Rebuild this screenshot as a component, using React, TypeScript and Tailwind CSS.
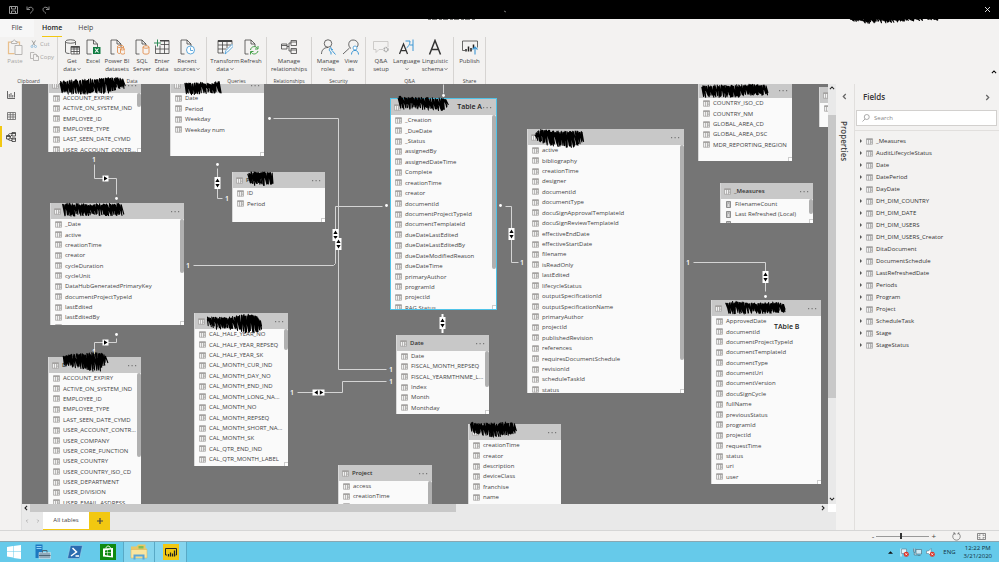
import type { ReactNode } from 'react';
import clsx from 'clsx';

type Point = [number, number];

interface TableNode {
  id: string;
  title?: string;
  hint?: string;
  x: number;
  y: number;
  w: number;
  h: number;
  fields: string[];
  thumb?: Point; // top, height
  selected?: boolean;
  measures?: boolean;
  resizable?: boolean;
}

const userFields = [
  'ACCOUNT_EXPIRY', 'ACTIVE_ON_SYSTEM_IND', 'EMPLOYEE_ID', 'EMPLOYEE_TYPE', 'LAST_SEEN_DATE_CYMD',
  'USER_ACCOUNT_CONTR...', 'USER_COMPANY', 'USER_CORE_FUNCTION', 'USER_COUNTRY', 'USER_COUNTRY_ISO_CD',
  'USER_DEPARTMENT', 'USER_DIVISION', 'USER_EMAIL_ASDRESS',
];

// positions are relative to the canvas
const nodes: TableNode[] = [
  { id: 'users', x: 26, y: -7, w: 93, h: 75, fields: userFields.slice(0, 6), thumb: [16, 14], resizable: true },
  { id: 'day', x: 148, y: -7, w: 94, h: 79, fields: ['Date', 'Period', 'Weekday', 'Weekday num'], resizable: true },
  { id: 'periods', title: 'P', x: 210, y: 88, w: 93, h: 50, fields: ['ID', 'Period'], resizable: true },
  {
    id: 'document', x: 28, y: 119, w: 134, h: 122, thumb: [16, 54], resizable: true,
    fields: ['_Date', 'active', 'creationTime', 'creator', 'cycleDuration', 'cycleUnit', 'DataHubGeneratedPrimaryKey', 'documentProjectTypeId', 'lastEdited', 'lastEditedBy', 'nextDocumentPeriodicMonth'],
  },
  {
    id: 'calendar', x: 172, y: 229, w: 94, h: 153, thumb: [16, 21], resizable: true,
    fields: ['CAL_HALF_YEAR_NO', 'CAL_HALF_YEAR_REPSEQ', 'CAL_HALF_YEAR_SK', 'CAL_MONTH_CUR_IND', 'CAL_MONTH_DAY_NO', 'CAL_MONTH_END_IND', 'CAL_MONTH_LONG_NA...', 'CAL_MONTH_NO', 'CAL_MONTH_REPSEQ', 'CAL_MONTH_SHORT_NA...', 'CAL_MONTH_SK', 'CAL_QTR_END_IND', 'CAL_QTR_MONTH_LABEL', 'CAL_QTR_NO'],
  },
  { id: 'creators', title: 'D', x: 26, y: 273, w: 93, h: 160, fields: userFields, thumb: [16, 84] },
  {
    id: 'task', hint: 'Table A', x: 368, y: 14, w: 107, h: 212, thumb: [16, 154], selected: true, resizable: true,
    fields: ['_Creation', '_DueDate', '_Status', 'assignedBy', 'assignedDateTime', 'Complete', 'creationTime', 'creator', 'documentId', 'documentProjectTypeId', 'documentTemplateId', 'dueDateLastEdited', 'dueDateLastEditedBy', 'dueDateModifiedReason', 'dueDateTime', 'primaryAuthor', 'programId', 'projectId', 'RAG Status'],
  },
  {
    id: 'dita', x: 505, y: 45, w: 157, h: 264, thumb: [16, 215], resizable: true,
    fields: ['active', 'bibliography', 'creationTime', 'designer', 'documentId', 'documentType', 'docuSignApprovalTemplateId', 'docuSignReviewTemplateId', 'effectiveEndDate', 'effectiveStartDate', 'filename', 'isReadOnly', 'lastEdited', 'lifecycleStatus', 'outputSpecificationId', 'outputSpecificationName', 'primaryAuthor', 'projectId', 'publishedRevision', 'references', 'requiresDocumentSchedule', 'revisionId', 'scheduleTaskId', 'status'],
  },
  {
    id: 'date', title: 'Date', x: 374, y: 251, w: 93, h: 79, thumb: [16, 36], resizable: true,
    fields: ['Date', 'FISCAL_MONTH_REPSEQ', 'FISCAL_YEARMTHNME_L...', 'Index', 'Month', 'Monthday'],
  },
  { id: 'project', title: 'Project', x: 316, y: 381, w: 94, h: 60, fields: ['access', 'creationTime', 'creator'], thumb: [16, 40] },
  { id: 'program', x: 446, y: 340, w: 93, h: 100, fields: ['creationTime', 'creator', 'description', 'deviceClass', 'franchise', 'name', 'region'] },
  {
    id: 'country', x: 676, y: -2, w: 94, h: 79, resizable: true,
    fields: ['COUNTRY_ISO_CD', 'COUNTRY_NM', 'GLOBAL_AREA_CD', 'GLOBAL_AREA_DSC', 'MDR_REPORTING_REGION'],
  },
  { id: 'stage', title: 'Stage', x: 797, y: 3, w: 93, h: 40, fields: ['Stage'] },
  {
    id: 'measures', title: '_Measures', x: 698, y: 99, w: 93, h: 40, thumb: [16, 15], measures: true, resizable: true,
    fields: ['FilenameCount', 'Last Refreshed (Local)', 'Total Sum'],
  },
  {
    id: 'audit', x: 689, y: 216, w: 110, h: 184, resizable: true,
    fields: ['ApprovedDate', 'documentId', 'documentProjectTypeId', 'documentTemplateId', 'documentType', 'documentUri', 'documentVersion', 'docuSignCycle', 'fullName', 'previousStatus', 'programId', 'projectId', 'requestTime', 'status', 'uri', 'user'],
  },
];

const relations = [
  '72,80 72,94 94,94 94,110',
  '94,254 94,258 72,258 72,266',
  '195,84 195,114 200,114',
  '251,34 316,34 316,285 364,285',
  '171,181 311,181 313,179 313,122 360,122',
  '275,308 320,308 320,297 364,297',
  '421,0 421,9',
  '483,122 489,122 489,178 496,178',
  '671,178 743,178 743,207',
];
const ones: Point[] = [[72, 75], [72, 267], [205, 114], [166, 181], [369, 285], [270, 308], [369, 297], [500, 178], [666, 178]];
const dots: Point[] = [[94, 114], [94, 250], [195, 80], [247, 34], [421, 11], [364, 121], [478, 121], [743, 212]];
const vertical: Point[] = [[195, 99], [313, 151], [316, 160], [420, 239], [489, 150], [743, 193]];

const fieldTables = [
  '_Measures', 'AuditLifecycleStatus', 'Date', 'DatePeriod', 'DayDate', 'DH_DIM_COUNTRY', 'DH_DIM_DATE',
  'DH_DIM_USERS', 'DH_DIM_USERS_Creator', 'DitaDocument', 'DocumentSchedule', 'LastRefreshedDate', 'Periods',
  'Program', 'Project', 'ScheduleTask', 'Stage', 'StageStatus',
];

// marker strokes: x, top, bottom along each one
const markers: [number, number, number][][] = [
  [[60, 82, 92], [70, 81, 93], [100, 79, 92], [110, 78, 92], [114, 78, 88], [124, 79, 87]],
  [[185, 83, 93], [190, 84, 94], [200, 83, 92], [210, 84, 92], [220, 82, 92]],
  [[248, 173, 184], [273, 173, 184]],
  [[63, 204, 215], [90, 205, 214], [122, 204, 215]],
  [[207, 318, 325], [215, 318, 328], [230, 318, 328], [240, 316, 331], [250, 315, 332], [258, 318, 330], [261, 322, 326]],
  [[63, 356, 365], [75, 355, 367], [90, 354, 370], [98, 353, 370], [103, 354, 364], [106, 357, 361]],
  [[398, 97, 108], [420, 98, 108], [440, 99, 110], [447, 100, 105]],
  [[535, 135, 138], [541, 130, 143], [555, 132, 145], [570, 132, 146], [583, 132, 141]],
  [[702, 86, 96], [735, 86, 96], [750, 85, 94], [767, 86, 94]],
  [[726, 303, 312], [740, 302, 313], [755, 304, 312], [775, 303, 312], [785, 305, 311]],
  [[470, 423, 431], [485, 424, 435], [495, 424, 436], [505, 423, 434], [515, 424, 432]],
  [[848, 18, 19], [865, 18, 22], [890, 18, 21], [920, 18, 19], [932, 18, 18], [938, 18, 20]],
];

function zigzag(profile: [number, number, number][], seed: number) {
  const points: string[] = [];
  let s = seed * 97 + 13;
  const noise = () => {
    s = (s * 1103515245 + 12345) % 2147483648;
    return s / 2147483648 - 0.5;
  };
  for (let i = 0; i < profile.length - 1; i++) {
    const [x0, t0, b0] = profile[i];
    const [x1, t1, b1] = profile[i + 1];
    for (let x = x0; x < x1; x += 1) {
      const k = (x - x0) / (x1 - x0);
      points.push(`${x + noise()},${t0 + (t1 - t0) * k + noise() * 2}`);
      points.push(`${x + 2 + noise() * 2},${b0 + (b1 - b0) * k + noise() * 3}`);
    }
  }
  return points.join(' ');
}

function GridIcon({ className = 'text-[#9b9997]' }: { className?: string }) {
  return (
    <svg className={clsx('h-[7px] w-[7px] shrink-0', className)} viewBox="0 0 14 14" fill="none" stroke="currentColor" strokeWidth="1.300">
      <path d="M1 1.500h12v11H1z" fill="#f1f1f1" />
      <path d="M1 2.500h12" strokeWidth="2.400" />
      <path d="M5 3v9.500M9 3v9.500M9 6.200h4M9 9.300h4" />
    </svg>
  );
}

function CalcIcon() {
  return (
    <svg className="h-[7px] w-[7px] shrink-0 text-[#777]" viewBox="0 0 14 14" fill="none" stroke="currentColor">
      <path d="M3 1h8v12H3z" strokeWidth="1.600" fill="#ddd" />
      <path d="M4.500 4h5M5 7.500h1M8 7.500h1M5 10h1M8 10h1" strokeWidth="1.600" />
    </svg>
  );
}

function TableCard({ node }: { node: TableNode }) {
  return (
    <section
      className={clsx(
        'absolute flex flex-col overflow-hidden bg-[#fafafa] text-[6px] text-[#444]',
        node.selected ? 'border border-[#4fc3e8]' : 'border-l border-[#d8d8d8]',
      )}
      style={{ left: node.x, top: node.y, width: node.w, height: node.h }}
    >
      <header className="flex h-4 shrink-0 items-center gap-[3px] bg-[#c8c8c8] pr-1 pl-[3px]">
        <GridIcon />
        <h2 className="font-semibold text-[#333]">{node.title}</h2>
        {node.hint && <span className="ml-auto text-[7px] font-semibold text-[#222]">{node.hint}</span>}
        <button className={clsx('leading-none text-[#777]', node.hint ? '-ml-[2px]' : 'ml-auto')} aria-label="More options">
          <svg className="h-[3px] w-[9px]" viewBox="0 0 9 3" fill="currentColor">
            <path d="M0 1h1.200v1.200H0zM3.500 1h1.200v1.200H3.500zM7 1h1.200v1.200H7z" />
          </svg>
        </button>
      </header>
      <ul className="flex shrink-0 flex-col pl-1" style={{ height: Math.round((node.fields.length * 52) / 5) }}>
        {node.fields.map(field => (
          <li key={field} className="flex min-h-0 flex-1 items-center gap-[3px] leading-[10px] whitespace-nowrap">
            {node.measures ? <CalcIcon /> : <GridIcon />}
            {field}
          </li>
        ))}
      </ul>
      {node.thumb && (
        <span className="absolute right-0 w-1 rounded-sm bg-[#b0b0b0]" style={{ top: node.thumb[0], height: node.thumb[1] }} />
      )}
      {node.resizable && (
        <span className="absolute right-0 bottom-0 h-1 w-1 border-t border-l border-[#ccc] bg-white" />
      )}
    </section>
  );
}

function Relations() {
  return (
    <svg className="pointer-events-none absolute inset-0 h-full w-full" fill="none">
      {relations.map(points => (
        <polyline key={points} points={points} stroke="#d4d4d4" strokeWidth="1" transform="translate(.5 .5)" />
      ))}
      {dots.map(([x, y]) => (
        <circle key={`${x}-${y}`} cx={x + 0.5} cy={y + 0.5} r="1.400" fill="#fff" />
      ))}
      {ones.map(([x, y]) => (
        <text key={`${x}-${y}`} x={x} y={y + 3} textAnchor="middle" fill="#fff" className="text-[7px] font-semibold">1</text>
      ))}
      <path d="M420.500 230v19" stroke="#fff" strokeWidth="2" />
      {vertical.map(([x, y]) => (
        <g key={`${x}-${y}`} transform={`translate(${x} ${y})`}>
          <path d="M-2.500-6h6V6h-6z" fill="#fff" />
          <path d="M-1.600-1 .5-4.500 2.600-1zM-1.600 1 .5 4.500 2.600 1z" fill="#000" />
        </g>
      ))}
      {[94, 258].map(y => (
        <g key={y} transform={`translate(83 ${y})`}>
          <path d="M-2.500-2.500h6v6h-6z" fill="#fff" />
          <path d="M-1-1.700 2.500.5-1 2.700z" fill="#000" />
        </g>
      ))}
      <path d="M290.500 305.500h12v6h-12z" fill="#fff" />
      <path d="m295.800 306.300-3.500 2.200 3.500 2.200zM297.800 306.300l3.500 2.200-3.500 2.200z" fill="#000" />
    </svg>
  );
}

function Chevron({ className }: { className?: string }) {
  return (
    <svg className={clsx('inline-block shrink-0', className)} viewBox="0 0 10 10" fill="none" stroke="currentColor" strokeWidth="1.800">
      <path d="m1.500 3.200 3.500 3.500 3.500-3.500" />
    </svg>
  );
}

function RibbonGroup({ label, children }: { label: string; children: ReactNode }) {
  return (
    <section className="flex h-[47px] flex-col border-r border-[#d6d4d2]">
      <div className="flex flex-1">{children}</div>
      <h2 className="text-center text-[5px] leading-[6px] text-[#444]">{label}</h2>
    </section>
  );
}

interface ToolProps {
  width: string;
  lines: string[];
  menu?: boolean;
  disabled?: boolean;
  children: ReactNode;
}

function Tool({ width, lines, menu, disabled, children }: ToolProps) {
  return (
    <button disabled={disabled} className={clsx('flex flex-col items-center pt-[2px]', width, disabled ? 'text-[#a8a6a4]' : 'text-[#444]')}>
      <svg className="mb-[2px] h-4 w-4 shrink-0" viewBox="0 0 32 32" fill="none" stroke="currentColor" strokeWidth="1.600">
        {children}
      </svg>
      {lines.map((line, i) => (
        <span key={i} className="flex h-2 items-center gap-px text-[6px] leading-[8px] whitespace-nowrap">
          {line}
          {menu && i === lines.length - 1 && <Chevron className="h-[4px] w-[4px]" />}
        </span>
      ))}
    </button>
  );
}

const Page = () => <path d="M11 30H4V2h12l8 8v6M16 2v8h8" />;
const Cylinder = () => (
  <g stroke="#e0843c" fill="#f7f2ee">
    <path d="M18 16v12c0 3 12 3 12 0V16" />
    <ellipse cx="24" cy="16" rx="6" ry="2.500" />
  </g>
);

function Ribbon() {
  return (
    <div className="flex bg-[#f3f2f1]">
      <RibbonGroup label="Clipboard">
        <Tool width="w-[30px]" lines={['Paste']} disabled>
          <path d="M9 6H3v23h12M20 6h5v6" stroke="#e9c08c" strokeWidth="2.500" />
          <path d="M9 9V5h3c0-4 5-4 5 0h3v4zM16 13h14v18H16z" fill="#f6f5f4" />
        </Tool>
        <div className="flex w-[27px] flex-col gap-1 pt-[3px] text-[6px] leading-[8px] text-[#a8a6a4]">
          <button disabled className="flex items-center gap-[2px]">
            <svg className="h-2 w-2" viewBox="0 0 16 16" fill="none" stroke="currentColor" strokeWidth="1.500">
              <path d="m4 1 6 10M11 1 5 11" stroke="#8a8886" />
              <circle cx="4" cy="13" r="2" stroke="#7fb4dc" />
              <circle cx="11" cy="13" r="2" stroke="#7fb4dc" />
            </svg>
            Cut
          </button>
          <button disabled className="flex items-center gap-px">
            <svg className="h-[9px] w-[9px]" viewBox="0 0 18 18" fill="none" stroke="currentColor" strokeWidth="1.500">
              <path d="M6 13H1V1h7l2 2M7 5h6l4 4v8H7zM13 5v4h4" />
            </svg>
            Copy
          </button>
        </div>
      </RibbonGroup>
      <RibbonGroup label="Data">
        <Tool width="w-7" lines={['Get', 'data']} menu>
          <path d="M3 5v21c0 2 4 3 8 3M23 5v7" />
          <ellipse cx="13" cy="5" rx="10" ry="3.500" />
          <path d="M14 15h17v15H14zM14 20h17M14 25h17M20 15v15M26 15v15" fill="#fff" />
          <path d="M14 16h17" strokeWidth="3" />
        </Tool>
        <Tool width="w-[14px]" lines={['Excel']}>
          <path d="M13 30H4V2h13l8 8v6M17 2v8h8" />
          <path d="M16 16h15v14H16z" fill="#107c41" stroke="none" />
          <path d="m20 19 7 8M27 19l-7 8" stroke="#fff" strokeWidth="2.200" />
        </Tool>
        <Tool width="w-[34px]" lines={['Power BI', 'datasets']}>
          <Page />
          <path d="M17 15v11c0 3 3 3 5 3M29 18v-3M23 20v8c0 3 9 3 9 0v-8" stroke="#e0843c" fill="#f7f2ee" />
          <ellipse cx="23" cy="15" rx="6" ry="2.200" stroke="#e0843c" />
          <ellipse cx="27" cy="20" rx="4" ry="2" stroke="#e0843c" />
        </Tool>
        <Tool width="w-4" lines={['SQL', 'Server']}>
          <Page />
          <Cylinder />
        </Tool>
        <Tool width="w-6" lines={['Enter', 'data']}>
          <path d="M13 3h17v26H3V13M3 20h27M13 11h17M12 13v16M21 3v26" />
          <path d="M12 3.500h18" strokeWidth="3" />
          <path d="M7 1v14M0 8h14" stroke="#2e8b57" strokeWidth="2" />
        </Tool>
        <Tool width="w-[26px]" lines={['Recent', 'sources']} menu>
          <Page />
          <circle cx="23" cy="22" r="8" stroke="#3a96d4" fill="#fff" />
          <path d="M23 17v6h5" stroke="#3a96d4" />
        </Tool>
        <span className="w-[6px]" />
      </RibbonGroup>
      <RibbonGroup label="Queries">
        <Tool width="w-[36px]" lines={['Transform', 'data']} menu>
          <path d="M14 28H2V3h28v8M2 12h26M2 20h17M11 6v22M20 6v12" />
          <path d="M2 4h28" strokeWidth="4" />
          <path d="m16 30 2-7 12-12 3 3-12 12z" stroke="#3a96d4" fill="#fff" />
        </Tool>
        <Tool width="w-4" lines={['Refresh']}>
          <Page />
          <path d="M15 22c1-8 11-9 14-3M30 14v6h-6M30 24c-2 7-11 8-14 2M15 31v-6h6" stroke="#43a047" strokeWidth="2" />
        </Tool>
        <span className="w-[7px]" />
      </RibbonGroup>
      <RibbonGroup label="Relationships">
        <Tool width="w-[44px]" lines={['Manage', 'relationships']}>
          <path d="M1 10h11v10H1zM20 3h11v10H20zM20 19h11v10H20zM1 13h11M20 6h11M20 22h11M12 15h4M20 8h-4v16h4" />
        </Tool>
      </RibbonGroup>
      <RibbonGroup label="Security">
        <Tool width="w-8" lines={['Manage', 'roles']}>
          <circle cx="16" cy="9" r="7.500" />
          <path d="M3 30c0-8 5-13 13-13" />
          <path d="M22 17c-5 2-4 8 0 9v5M22 17l1 5 3-1M24 23l7 8" stroke="#3a96d4" strokeWidth="2" />
        </Tool>
        <Tool width="w-[14px]" lines={['View', 'as']}>
          <path d="M16 19c-7-4-6-17 4-17 9 0 13 9 8 14M13 18 0 30" />
          <circle cx="24" cy="18" r="4" stroke="#3a96d4" fill="#fff" />
          <path d="M17 31c0-11 14-11 14 0" stroke="#3a96d4" strokeWidth="2" />
        </Tool>
        <span className="w-[7px]" />
      </RibbonGroup>
      <RibbonGroup label="Q&A">
        <Tool width="w-[30px]" lines={['Q&A', 'setup']}>
          <path d="M20 21h-8l-6 6v-6H1V5h29v11" stroke="#c4c2c0" />
          <circle cx="26" cy="21" r="4" stroke="#aaa" strokeWidth="3" strokeDasharray="3 1" />
        </Tool>
        <Tool width="w-[21px]" lines={['Language', '']} menu>
          <path d="m1 30 8-20 8 20M4 23h10" stroke="#333" strokeWidth="2.500" />
          <path d="M13 4h9c0 7-3 11-7 14M28 1v23M22 12h6" stroke="#3a96d4" strokeWidth="2" />
        </Tool>
        <Tool width="w-[36px]" lines={['Linguistic', 'schema']} menu>
          <path d="M5 31 16 3l11 28M9 21h14" stroke="#333" strokeWidth="3" />
        </Tool>
      </RibbonGroup>
      <RibbonGroup label="Share">
        <Tool width="w-[31px]" lines={['Publish']}>
          <path d="M6 23H1V4h30v13" />
          <path d="M8 25v-5M13 25V15M18 25v-7M23 19v-8" stroke="#222" strokeWidth="3" />
          <path d="M26 31V16M21 21l5-5 5 5" stroke="#3a96d4" strokeWidth="2.200" />
        </Tool>
      </RibbonGroup>
      <button className="mr-[2px] mb-[2px] ml-auto self-end text-black" aria-label="Collapse ribbon">
        <Chevron className="block h-[6px] w-[6px] rotate-180" />
      </button>
    </div>
  );
}

function LeftRail() {
  const button = 'flex h-[21px] w-full items-center justify-center border-l-2 pr-px text-[#666]';
  return (
    <nav className="w-[22px] shrink-0 border-r border-[#dedede] bg-[#f3f2f1]">
      <button className={clsx(button, 'border-transparent')} aria-label="Report">
        <svg className="h-2 w-2" viewBox="0 0 16 16" fill="none" stroke="currentColor" strokeWidth="1.500">
          <path d="M1 0v15h15M4.500 13V6M8 13V4M11.500 13V8M15 13V2" strokeWidth="2" />
        </svg>
      </button>
      <button className={clsx(button, 'border-transparent')} aria-label="Data">
        <svg className="h-2 w-[9px]" viewBox="0 0 18 16" fill="none" stroke="currentColor" strokeWidth="1.600">
          <path d="M1 1h16v14H1zM1 5.500h16M1 10h16M6.500 1v14M12 1v14" />
        </svg>
      </button>
      <button className={clsx(button, 'border-[#f2c811]')} aria-label="Model">
        <svg className="h-[10px] w-[10px] text-[#333]" viewBox="0 0 20 20" fill="none" stroke="currentColor" strokeWidth="1.600">
          <path d="M1 7h7v7H1zM12 1h7v7h-7zM12 12h7v7h-7zM1 9h7M12 3h7M12 14h7M4 7c1-4 4-4 8-4M4 14c1 3 4 3 8 3M8 10l4-4M8 11l4 3" />
        </svg>
      </button>
    </nav>
  );
}

function ModelView() {
  return (
    <main className="flex min-w-0 flex-1 flex-col bg-[#e9e9e9]">
      <div className="flex min-h-0 flex-1">
        <div className="relative min-w-0 flex-1 overflow-hidden bg-[#757575]">
          <Relations />
          {nodes.map(node => <TableCard key={node.id} node={node} />)}
          <span className="absolute top-[238px] left-[752px] text-[7px] leading-[9px] font-semibold text-[#222]">TAble B</span>
        </div>
        <div className="flex w-2 shrink-0 flex-col items-center text-[#222]">
          <Chevron className="my-px h-[6px] w-[6px] rotate-180" />
          <span className="mt-[23px] h-[283px] w-full bg-[#c8c8c8]" />
          <Chevron className="mt-auto mb-[2px] h-[6px] w-[6px]" />
        </div>
      </div>
      <div className="flex h-2 shrink-0 items-center text-[#222]">
        <Chevron className="mx-px h-[6px] w-[6px] rotate-90" />
        <span className="h-full w-[426px] bg-[#c8c8c8]" />
        <Chevron className="mr-[2px] ml-auto h-[6px] w-[6px] -rotate-90" />
        <span className="h-2 w-2 bg-white" />
      </div>
      <div className="flex h-[18px] shrink-0">
        <div className="flex w-[21px] items-center justify-around text-[#999]">
          <Chevron className="h-1 w-1 rotate-90" />
          <Chevron className="h-1 w-1 -rotate-90" />
        </div>
        <button className="w-[46px] border-b border-[#f2c811] bg-white text-[6px] text-[#444]">All tables</button>
        <button className="flex w-[21px] items-center justify-center bg-[#f2c811] text-[#444]" aria-label="Add page">
          <svg className="h-[6px] w-[6px]" viewBox="0 0 6 6" stroke="currentColor" strokeWidth="1.200"><path d="M3 0v6M0 3h6" /></svg>
        </button>
      </div>
    </main>
  );
}

function FieldsPane() {
  return (
    <aside className="flex w-[145px] shrink-0 flex-col border-l border-[#e1dfdd] bg-[#f3f2f1]">
      <div className="flex h-[26px] items-center justify-between pr-2 pl-2 text-[#666]">
        <h2 className="text-[8px] font-semibold text-[#333]">Fields</h2>
        <Chevron className="h-[7px] w-[7px] -rotate-90" />
      </div>
      <div className="mr-[2px] ml-px flex h-4 items-center gap-1 border border-[#d2d0ce] bg-white px-[5px]">
        <svg className="h-2 w-2 shrink-0 text-[#888]" viewBox="0 0 16 16" fill="none" stroke="currentColor" strokeWidth="1.400">
          <circle cx="9.500" cy="6" r="5" />
          <path d="m6 10-5 5" />
        </svg>
        <input type="search" aria-label="Search" placeholder="Search" className="min-w-0 flex-1 text-[6px] leading-[10px] outline-none placeholder:text-[#888]" />
      </div>
      <ul className="mt-1 flex-1 border-t border-[#e1dfdd] pt-1 text-[6px] text-[#333]">
        {fieldTables.map(name => (
          <li key={name} className="flex h-3 items-center pl-[5px]">
            <svg className="mr-1 h-1 w-[2px] text-[#555]" viewBox="0 0 2 4" fill="currentColor"><path d="M0 0l2 2-2 2z" /></svg>
            <GridIcon className="mr-[3px] text-[#999]" />
            {name}
          </li>
        ))}
      </ul>
    </aside>
  );
}

function StatusBar() {
  return (
    <footer className="flex h-[11px] shrink-0 items-center justify-end border-t border-[#d6d6d6] bg-[#f3f2f1] pr-[13px] text-[#444]">
      <button className="text-[8px] leading-[8px]" aria-label="Zoom out">-</button>
      <input
        type="range"
        aria-label="Zoom"
        defaultValue={47}
        className="mx-[2px] h-2 w-[53px] appearance-none bg-[linear-gradient(#999,#999)] bg-[length:100%_1px] bg-center bg-no-repeat [&::-webkit-slider-thumb]:h-[6px] [&::-webkit-slider-thumb]:w-[2px] [&::-webkit-slider-thumb]:appearance-none [&::-webkit-slider-thumb]:bg-[#333]"
      />
      <button className="text-[8px] leading-[8px]" aria-label="Zoom in">+</button>
      <svg className="ml-4 h-[9px] w-[9px] text-[#666]" viewBox="0 0 18 18" fill="none" stroke="currentColor" strokeWidth="1.400">
        <path d="M12 2a7.500 7.500 0 1 1-6 0M6 6V2H2M12 5V2h3" />
      </svg>
      <svg className="ml-4 h-[7px] w-[9px] text-[#666]" viewBox="0 0 18 14" fill="none" stroke="currentColor" strokeWidth="1.500">
        <path d="M1 1h16v12H1zM4 6V4h3M11 4h3v2M14 8v2h-3M7 10H4V8" />
      </svg>
    </footer>
  );
}

function Taskbar() {
  return (
    <footer className="flex h-[21px] shrink-0 items-stretch border-t border-[#8aa7b2] bg-[#66caea] text-[6px] text-[#12303c]">
      <button className="flex w-[27px] items-center justify-center" aria-label="Start">
        <svg className="h-[14px] w-[14px]" viewBox="0 0 28 28" fill="#fff">
          <path d="M0 4l12-2v11H0zM13 2l15-2v13H13zM0 14h12v11L0 23zM13 14h15v14l-15-2z" />
        </svg>
      </button>
      <button className="flex w-[31px] items-center justify-center" aria-label="Server Manager">
        <svg className="h-4 w-4" viewBox="0 0 32 32">
          <path d="M1 1h14v27H1z" fill="#1c78c0" />
          <path d="M3 5h10M3 9h10" stroke="#8fd0f5" strokeWidth="2" />
          <path d="M8 17h23v12H8z" fill="#8fa9ba" stroke="#e6eef3" />
          <path d="M15 17v-4h9v4M8 23h23" fill="none" stroke="#4b6575" strokeWidth="2" />
        </svg>
      </button>
      <button className="flex w-[34px] items-center justify-center" aria-label="PowerShell">
        <svg className="h-[14px] w-4" viewBox="0 0 32 28">
          <path d="M7 1h24l-6 26H1z" fill="#2b6cb0" stroke="#a9d7ef" />
          <path d="m11 6 8 8-11 8M17 22h7" stroke="#fff" strokeWidth="3" fill="none" />
        </svg>
      </button>
      <button className="flex w-[31px] items-center justify-center" aria-label="Store">
        <svg className="h-4 w-4" viewBox="0 0 32 32">
          <path d="M0 0h32v32H0z" fill="#118a11" />
          <path d="m6 9 20-1v19L6 25z" fill="#fff" />
          <path d="M12 9c0-6 8-7 9 0" stroke="#fff" strokeWidth="2" fill="none" />
          <path d="m10 13 5-1v5h-5zM16 12l6-1v6h-6zM10 18h5v5l-5-1zM16 18h6v6l-6-1z" fill="#118a11" />
        </svg>
      </button>
      <button className="flex w-8 items-center justify-center border-x border-[#58a9c6] bg-[#85d5ee]" aria-label="Explorer">
        <svg className="h-4 w-[18px]" viewBox="0 0 36 32">
          <path d="M2 5h11l3-4h15v8h3v18H2z" fill="#e9c766" />
          <path d="M17 4h10v5H17z" fill="#7fbf5a" />
          <path d="M2 11h32v17H2z" fill="#f8e5a0" stroke="#d5b254" />
          <path d="M9 31v-8h18v8" stroke="#5aa5d6" strokeWidth="4" fill="none" />
        </svg>
      </button>
      <button className="flex w-8 items-center justify-center border-r border-[#58a9c6] bg-[#85d5ee]" aria-label="Power BI">
        <svg className="h-4 w-4" viewBox="0 0 32 32">
          <path d="M0 0h32v32H0z" fill="#f2c811" />
          <path d="M8 22H5V9h22v13h-2" fill="none" stroke="#222" strokeWidth="2" />
          <path d="M11 25v-5M15 25v-8M19 25v-6M23 25V13" stroke="#222" strokeWidth="2.500" />
        </svg>
      </button>
      <div className="ml-auto flex items-center pr-[7px]">
        <svg className="mr-[7px] h-[3px] w-[5px]" viewBox="0 0 4 2" fill="#111"><path d="M2 0l2 2H0z" /></svg>
        <svg className="mr-1 h-[9px] w-[9px]" viewBox="0 0 18 18" fill="none">
          <path d="M2 1v16" stroke="#fff" strokeWidth="2" />
          <path d="M3 2h10v9H3z" fill="#dff1f8" stroke="#567" />
          <circle cx="12.500" cy="12.500" r="5" fill="#d9362b" />
          <path d="m10.500 10.500 4 4M14.500 10.500l-4 4" stroke="#fff" strokeWidth="1.500" />
        </svg>
        <svg className="mr-1 h-[9px] w-[9px]" viewBox="0 0 18 18" fill="#cfeaf5" stroke="#4d6a78" strokeWidth="1.300">
          <path d="M6 3h11v9H6zM1 1v6c0 2 3 2 3 0V1M2.500 8v6h6M9 15h6" />
        </svg>
        <svg className="mr-2 h-[9px] w-[9px]" viewBox="0 0 18 18" fill="none">
          <path d="M1 6h4l5-5v15l-5-5H1z" fill="#fff" stroke="#567" />
          <circle cx="12.500" cy="12.500" r="5" fill="#d9362b" />
          <path d="m10.500 10.500 4 4M14.500 10.500l-4 4" stroke="#fff" strokeWidth="1.500" />
        </svg>
        <span>ENG</span>
        <time className="ml-2 text-center leading-[8px]">
          12:22 PM
          <br />
          3/21/2020
        </time>
      </div>
    </footer>
  );
}

export default function App() {
  return (
    <div className="relative flex h-screen w-full flex-col overflow-hidden bg-[#f3f2f1] font-['Open_Sans','Noto_Sans',sans-serif]">
      <header className="flex h-[19px] shrink-0 items-center bg-black pr-[9px] pl-[9px] text-[#999]">
        <svg className="h-2 w-[9px]" viewBox="0 0 18 16" fill="none" stroke="currentColor" strokeWidth="2">
          <path d="M1 1h16v14H1zM5 1v5h8V1M5 15v-5h8v5" />
        </svg>
        <svg className="ml-2 h-2 w-2" viewBox="0 0 16 16" fill="none" stroke="currentColor" strokeWidth="1.800">
          <path d="M2 1v6h6M2 7c5-7 12-5 12 0 0 3-3 5-6 8" />
        </svg>
        <svg className="ml-2 h-2 w-2" viewBox="0 0 16 16" fill="none" stroke="currentColor" strokeWidth="1.800">
          <path d="M14 1v6H8M14 7C9 0 2 2 2 7c0 3 3 5 6 8" />
        </svg>
        <button className="ml-auto text-white" aria-label="Close">
          <svg className="h-[5px] w-[5px]" viewBox="0 0 6 6" stroke="currentColor"><path d="m0 0 6 6M6 0 0 6" /></svg>
        </button>
      </header>

      <nav className="flex h-[18px] shrink-0 text-[7px] leading-[18px] text-[#444]">
        <button className="w-[34px] bg-[#f7f7f7]">File</button>
        <button className="ml-2 border-b border-[#f2c811] font-semibold text-[#222]">Home</button>
        <button className="ml-4">Help</button>
      </nav>
      <Ribbon />

      <div className="flex min-h-0 flex-1">
        <LeftRail />
        <ModelView />
        <aside className="flex w-[18px] shrink-0 flex-col items-center bg-[#f3f2f1] pr-[2px] text-[#444]">
          <Chevron className="mt-[9px] h-[7px] w-[7px] rotate-90 text-[#666]" />
          <h2 className="mt-[21px] text-[8px] leading-[10px] font-semibold [writing-mode:vertical-rl]">Properties</h2>
        </aside>
        <FieldsPane />
      </div>
      <StatusBar />
      <Taskbar />

      {/* marker redactions */}
      <svg className="pointer-events-none absolute inset-0 h-full w-full" fill="none" stroke="#000" strokeLinejoin="round">
        {markers.map((profile, i) => (
          <polyline key={i} points={zigzag(profile, i + 1)} strokeWidth="1.100" />
        ))}
        <path d="M428 19h48" strokeDasharray="3 1 5 2" />
        <path d="M504 11l2 1" stroke="#777" />
      </svg>
    </div>
  );
}
